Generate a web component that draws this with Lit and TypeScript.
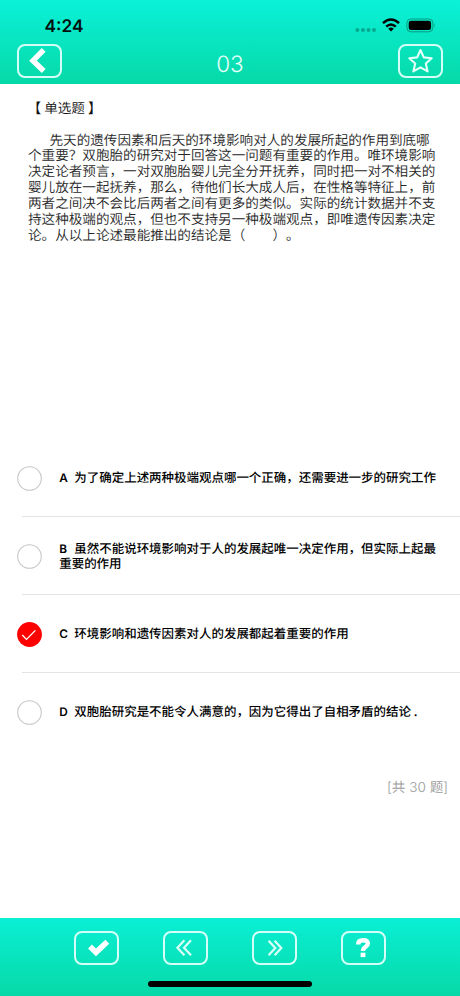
import { LitElement, html, css, svg, nothing } from "lit";
import { customElement, property } from "lit/decorators.js";

const icons: Record<string, unknown> = {
  back: svg`<path d="M27.3 6.2 L16.6 17 L27.3 27.4" fill="none" stroke="#fff" stroke-width="5.4" transform="translate(-.6 -.4)"/>`,
  star: svg`<path d="M22.5 6 L25.8 13.4 L33.7 14.2 L27.8 19.5 L29.6 27.4 L22.5 23.4 L15.4 27.4 L17.2 19.5 L11.3 14.2 L19.2 13.4 Z" fill="none" stroke="#e4fffa" stroke-width="2.1" stroke-linejoin="round"/>`,
  check: svg`<path d="M16 15.6 L22 21.4 L33.3 10.8" fill="none" stroke="#fff" stroke-width="5.6"/>`,
  prev: svg`<path d="M21.4 9.2 L14.4 16.7 L21.4 24.2 M28 9.2 L21 16.7 L28 24.2" fill="none" stroke="#d9fff8" stroke-width="2.2"/>`,
  next: svg`<path d="M16.6 9.8 L23.3 17 L16.6 24.2 M22.6 9.8 L29.3 17 L22.6 24.2" fill="none" stroke="#d9fff8" stroke-width="2.2"/>`,
  help: svg`<path d="M17.2 13.4 C17.2 10.2 19.2 9.2 22 9.2 C25 9.2 26.9 10.4 26.9 12.6 C26.9 16.3 22 15.2 22 20" fill="none" stroke="#fff" stroke-width="4.4"/><rect x="19.6" y="21.7" width="4.8" height="4.4" fill="#fff"/>`,
};

@customElement("icon-button")
class IconButton extends LitElement {
  @property() icon = "back";
  static styles = css`
    :host { display: block; width: 45px; height: 34px; flex: none; }
    .btn {
      display: block; box-sizing: border-box; width: 45px; height: 34px; padding: 0;
      border: 2px solid #d4fff8; border-radius: 8px; background: none;
    }
    .glyph { display: block; width: 45px; height: 34px; margin: -2px; }
  `;
  render() {
    return html`<button class="btn" aria-label=${this.icon}>
      <svg class="glyph" viewBox="0 0 45 34">${icons[this.icon]}</svg>
    </button>`;
  }
}

@customElement("answer-option")
class AnswerOption extends LitElement {
  @property() letter = "";
  @property({ attribute: false }) lines: string[] = [];
  @property({ type: Boolean }) selected = false;
  @property({ type: Boolean }) last = false;
  static styles = css`
    :host { display: block; height: 78px; }
    .row { display: flex; align-items: center; height: 77px; padding-left: 16.5px; padding-top: 1.6px; box-sizing: border-box; }
    .mark { width: 25px; height: 25px; flex: none; display: block; }
    .text { margin: -2px 0 0 17.7px; font-size: 12.48px; line-height: 14.6px; font-weight: 500; color: #000; white-space: pre; }
    .letter { display: inline-block; width: 15.1px; font-family: Inter, sans-serif; font-size: 11.8px; line-height: 1; font-weight: 600; }
    .line { height: 1px; margin-left: 22px; background: #e3e3e5; }
  `;
  render() {
    return html`
      <div class="row">
        <svg class="mark" viewBox="0 0 25 25">
          ${this.selected
            ? svg`<circle cx="12.5" cy="12.5" r="12.4" fill="#f00"/><path d="M5.2 13 L9.5 17.4 L18.4 8.4" fill="none" stroke="#fff" stroke-width="1.3"/>`
            : svg`<circle cx="12.5" cy="12.5" r="11.8" fill="#fff" stroke="#c7c7c9" stroke-width="1.1"/>`}
        </svg>
        <div class="text"><span class="letter">${this.letter}</span>${this.lines.join("\n")}</div>
      </div>
      ${this.last ? nothing : html`<div class="line"></div>`}
    `;
  }
}

const question = [
  "先天的遗传因素和后天的环境影响对人的发展所起的作用到底哪",
  "个重要？双胞胎的研究对于回答这一问题有重要的作用。唯环境影响",
  "决定论者预言，一对双胞胎婴儿完全分开抚养，同时把一对不相关的",
  "婴儿放在一起抚养，那么，待他们长大成人后，在性格等特征上，前",
  "两者之间决不会比后两者之间有更多的类似。实际的统计数据并不支",
  "持这种极端的观点，但也不支持另一种极端观点，即唯遗传因素决定",
  "论。从以上论述最能推出的结论是（　　）。",
];

const options = [
  { letter: "A", lines: ["为了确定上述两种极端观点哪一个正确，还需要进一步的研究工作"] },
  { letter: "B", lines: ["虽然不能说环境影响对于人的发展起唯一决定作用，但实际上起最", "重要的作用"] },
  { letter: "C", lines: ["环境影响和遗传因素对人的发展都起着重要的作用"], selected: true },
  { letter: "D", lines: ["双胞胎研究是不能令人满意的，因为它得出了自相矛盾的结论 ."] },
];

@customElement("app-root")
class AppRoot extends LitElement {
  static styles = css`
    :host {
      display: flex; flex-direction: column; width: 460px; height: 996px; overflow: hidden;
      background: #fff; font-family: "Noto Sans CJK SC", sans-serif; text-rendering: geometricPrecision;
      text-spacing-trim: space-all;
    }
    .header { height: 83.5px; flex: none; background: linear-gradient(#0af1d9, #06d9a7); }
    .status { height: 44px; display: flex; justify-content: space-between; box-sizing: border-box; padding: 15px 24px 0 44.5px; }
    .time { font: 600 17.3px/21px Inter, sans-serif; color: #03110e; padding-top: .6px; }
    .signals { display: block; width: 82px; height: 20px; }
    .nav { display: flex; justify-content: space-between; padding: 0 16.5px; }
    .title { font: 300 22.5px/38px Inter, sans-serif; color: #e5fffa; margin-top: 2px; }
    .content { flex: 1; min-height: 0; display: flex; flex-direction: column; }
    .kind { margin-left: 27.5px; padding-top: 13px; height: 35px; font-size: 13.6px; line-height: 20px; font-weight: 350; color: #111; white-space: pre; }
    .question { margin-left: 28px; height: 307.7px; font-size: 13.58px; line-height: 15.9px; font-weight: 350; color: #262626; white-space: pre; }
    .first { padding-left: 21.5px; }
    .total { margin: 25px 12px 0 0; text-align: right; font-size: 13.6px; line-height: 20px; font-weight: 350; color: #999; }
    .num { font-family: Inter, sans-serif; font-weight: 300; font-size: 13.6px; }
    .footer { height: 78px; flex: none; box-sizing: border-box; background: linear-gradient(#0aefd5, #06d9a7); display: flex; flex-direction: column; align-items: center; padding-top: 13px; }
    .actions { display: flex; gap: 43.8px; }
    .home { width: 164px; height: 6px; border-radius: 3px; background: #000; margin-top: 16px; }
  `;
  render() {
    return html`
      <div class="header">
        <div class="status">
          <div class="time">4:24</div>
          <svg class="signals" viewBox="0 0 82 20">
            <g fill="#07a98f">
              <circle cx="3.4" cy="15" r="2"/><circle cx="9" cy="15" r="2"/><circle cx="14.5" cy="15" r="2"/><circle cx="20" cy="15" r="2"/>
            </g>
            <g fill="none" stroke="#000" stroke-width="2.5">
              <path d="M29 8.2 Q37 .8 45 8.2"/><path d="M32.2 11.7 Q37 7.2 41.8 11.7"/>
            </g>
            <path d="M34.2 13.8 Q37 11.4 39.8 13.8 L37 16.6 Z"/>
            <rect x="52.9" y="4" width="26" height="12.8" rx="4" fill="none" stroke="#079c81" stroke-width="1"/>
            <rect x="54.7" y="5.8" width="22.4" height="9.2" rx="2.3"/>
            <path d="M80.2 8.2 Q82 10.3 80.2 12.5 Z" fill="#079c81"/>
          </svg>
        </div>
        <div class="nav">
          <icon-button icon="back"></icon-button>
          <div class="title">03</div>
          <icon-button icon="star"></icon-button>
        </div>
      </div>
      <div class="content">
        <div class="kind">【 单选题 】</div>
        <div class="question">${question.map((l, i) => html`<div class=${i === 0 ? "first" : "rest"}>${l}</div>`)}</div>
        <div>
          ${options.map((o, i) => html`<answer-option .letter=${o.letter} .lines=${o.lines} ?selected=${o.selected ?? false} ?last=${i === options.length - 1}></answer-option>`)}
        </div>
        <div class="total"><span class="num">[</span>共<span class="num"> 30 </span>题<span class="num">]</span></div>
      </div>
      <div class="footer">
        <div class="actions">
          <icon-button icon="check"></icon-button>
          <icon-button icon="prev"></icon-button>
          <icon-button icon="next"></icon-button>
          <icon-button icon="help"></icon-button>
        </div>
        <div class="home"></div>
      </div>
    `;
  }
}
